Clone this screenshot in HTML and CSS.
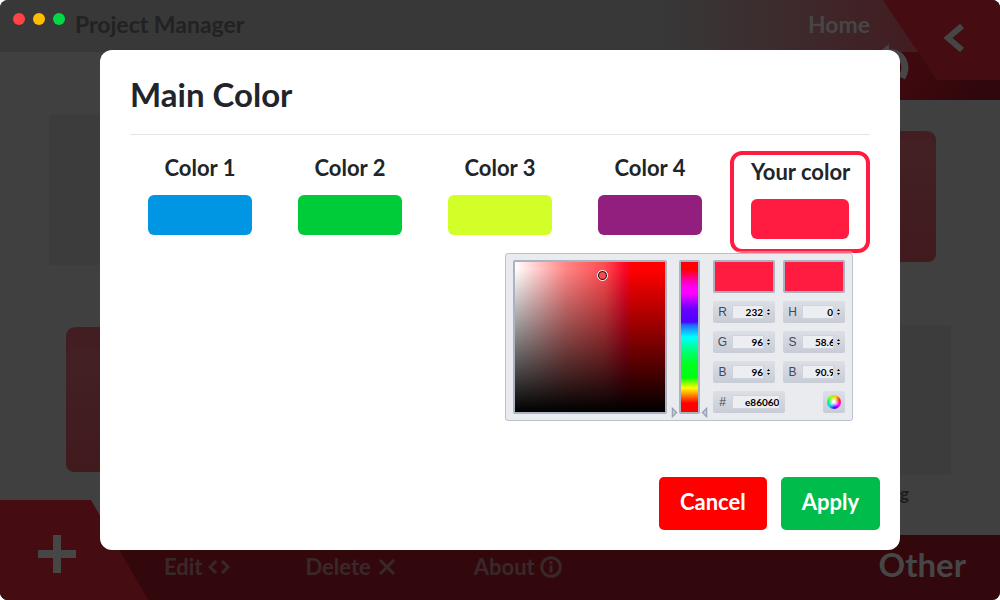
FILE: index.html
```html
<!DOCTYPE html>
<html lang="en">
<head>
<meta charset="utf-8">
<title>Project Manager</title>
<link rel="stylesheet" href="styles.css">
</head>
<body>
<svg class="symbols" aria-hidden="true">
  <defs>
    <linearGradient id="front" x1="0" y1="0" x2="0" y2="1"><stop offset="0" stop-color="#422124"/><stop offset="1" stop-color="#411a1e"/></linearGradient>
    <symbol id="folder" viewBox="0 0 150 150">
      <path fill="#421e22" d="M27 2h35q6 0 9 7t9 7h45q10 0 10 10v100H17V12Q17 2 27 2z"/>
      <rect x="17" y="24" width="118" height="123" rx="8" fill="url(#front)"/>
    </symbol>
  </defs>
</svg>
<div class="app">
  <header class="topbar">
    <div class="lights"><span class="light close"></span><span class="light minimize"></span><span class="light maximize"></span></div>
    <span class="app-name">Project Manager</span>
    <a class="home" href="#">Home</a>
    <div class="side-panel">
      <svg class="undo" viewBox="0 0 40 40"><path d="M16 2v18L5 11z" fill="#464646"/><path d="M14 11Q30 9 32 25q0 5-3 11" fill="none" stroke="#464646" stroke-width="7"/></svg>
    </div>
    <button class="back" aria-label="Back"><svg viewBox="0 0 24 32"><path d="M20 4 6 16l14 12" fill="none" stroke="#464646" stroke-width="6"/></svg></button>
  </header>
  <main class="projects">
    <div class="tile"></div>
    <svg class="folder"><use href="#folder"/></svg>
    <svg class="folder"><use href="#folder"/></svg>
    <div class="tile"><span class="tile-label">g</span></div>
  </main>
  <footer class="bottombar">
    <button class="add" aria-label="Add"><svg viewBox="0 0 38 38"><path d="M19 0v38M0 19h38" stroke="#464646" stroke-width="8"/></svg></button>
    <button class="action">Edit <svg viewBox="0 0 22 20"><path d="M8 4 2 10l6 6M14 4l6 6-6 6" /></svg></button>
    <button class="action">Delete <svg viewBox="0 0 22 20"><path d="m4 3 14 14M18 3 4 17"/></svg></button>
    <button class="action">About <svg viewBox="0 0 22 22"><circle cx="11" cy="11" r="9.3"/><path d="M11 9.500v7M11 5v3"/></svg></button>
    <span class="other">Other</span>
  </footer>
</div>
<div class="overlay">
  <section class="modal" role="dialog" aria-labelledby="modal-title">
    <h1 class="title" id="modal-title">Main Color</h1>
    <div class="options">
      <div class="option"><button class="choice">Color 1<span class="swatch blue"></span></button></div>
      <div class="option"><button class="choice">Color 2<span class="swatch green"></span></button></div>
      <div class="option"><button class="choice">Color 3<span class="swatch lime"></span></button></div>
      <div class="option"><button class="choice">Color 4<span class="swatch purple"></span></button></div>
      <div class="option">
        <button class="choice selected">Your color<span class="swatch red"></span></button>
        <div class="picker">
          <div class="area"><span class="cursor"></span></div>
          <div class="hue">
            <svg viewBox="0 0 6 10"><path d="M1 1v8l4-4z"/></svg>
            <input type="range" aria-label="Hue" min="0" max="360" value="0">
            <svg viewBox="0 0 6 10"><path d="M5 1v8L1 5z"/></svg>
          </div>
          <div class="fields">
            <span class="preview"></span><span class="preview"></span>
            <label class="field"><span class="key">R</span><input value="232"><svg class="spin" viewBox="0 0 5 8"><path d="M1 3h3L2.500 1zM1 5h3L2.500 7z"/></svg></label>
            <label class="field"><span class="key">H</span><input value="0"><svg class="spin" viewBox="0 0 5 8"><path d="M1 3h3L2.500 1zM1 5h3L2.500 7z"/></svg></label>
            <label class="field"><span class="key">G</span><input value="96"><svg class="spin" viewBox="0 0 5 8"><path d="M1 3h3L2.500 1zM1 5h3L2.500 7z"/></svg></label>
            <label class="field"><span class="key">S</span><input value="58.6"><svg class="spin" viewBox="0 0 5 8"><path d="M1 3h3L2.500 1zM1 5h3L2.500 7z"/></svg></label>
            <label class="field"><span class="key">B</span><input value="96"><svg class="spin" viewBox="0 0 5 8"><path d="M1 3h3L2.500 1zM1 5h3L2.500 7z"/></svg></label>
            <label class="field"><span class="key">B</span><input value="90.9"><svg class="spin" viewBox="0 0 5 8"><path d="M1 3h3L2.500 1zM1 5h3L2.500 7z"/></svg></label>
            <label class="field hex"><span class="key">#</span><input value="e86060"></label>
            <button class="submit" aria-label="Use color"><span class="wheel"></span></button>
          </div>
        </div>
      </div>
    </div>
    <div class="buttons">
      <button class="button cancel">Cancel</button>
      <button class="button apply">Apply</button>
    </div>
  </section>
</div>
</body>
</html>
```
FILE: styles.css
```css
* { box-sizing: border-box; }
body { margin: 0; background: #fff; font-family: Lato, "Open Sans", sans-serif; font-weight: 700; }
button { border: 0; padding: 0; background: none; font: inherit; color: inherit; }
.symbols { position: absolute; width: 0; height: 0; }

.app { display: flex; flex-direction: column; min-height: 100vh; background: #404040; border-radius: 8px; overflow: hidden; }
.topbar { position: relative; display: flex; align-items: center; height: 52px; padding: 0 130px 4px 13px; font-size: 23px; background: linear-gradient(90deg, #383838 66%, #421e22 90%); }
.lights { display: flex; gap: 8px; padding-bottom: 10px; }
.light { width: 12px; height: 12px; border-radius: 50%; }
.close { background: #ff4245; }
.minimize { background: #ffbd00; }
.maximize { background: #00d944; }
.app-name { flex: 1; padding-left: 10px; color: #222; }
.home { color: #464646; text-decoration: none; }
.side-panel { position: absolute; top: 52px; right: 0; width: 140px; height: 48px; background: linear-gradient(135deg, #3d090f 40%, #30070b 85%); }
.undo { position: absolute; top: -10px; left: 13px; width: 40px; height: 40px; }
.back { position: absolute; top: 0; right: 0; width: 117px; height: 80px; padding-left: 24px; background: #450c11; clip-path: polygon(0 0, 100% 0, 100% 100%, 54px 100%); }
.back svg { width: 24px; height: 32px; }

.projects { flex: 1; display: grid; grid-template-columns: 150px 150px; grid-auto-rows: 150px; justify-content: space-between; row-gap: 60px; padding: 63px 49px 0; }
.tile { background: #3c3c3c; }
.folder { width: 150px; height: 150px; }
.projects .folder:nth-child(3) { grid-column: 1; grid-row: 2; }
.tile-label { display: block; padding: 160px 42px 0 0; text-align: right; font-size: 17px; line-height: 18px; color: #1c1c1c; }

.bottombar { position: relative; display: flex; align-items: center; height: 65px; padding: 0 34px 2px 164px; gap: 76px; background: #32080d; color: #3a2829; font-size: 22px; }
.add { position: absolute; left: 0; bottom: 0; width: 148px; height: 100px; padding: 12px 34px 0 0; background: #450c11; clip-path: polygon(0 0, 91px 0, 100% 100%, 0 100%); }
.add svg { width: 38px; height: 38px; }
.action { display: flex; align-items: center; gap: 5px; }
.action svg { width: 22px; height: 22px; fill: none; stroke: #3a2829; stroke-width: 3; }
.other { margin-left: auto; padding-bottom: 6px; font-size: 33px; color: #464646; }

.overlay { position: fixed; inset: 0; display: flex; padding: 50px 100px; }
.modal { flex: 1; display: flex; flex-direction: column; padding: 20px 20px 20px 30px; background: #fff; border-radius: 12px; color: #212529; }
.title { margin: 0 10px 16px 0; padding-bottom: 16px; border-bottom: 1px solid #e3e4e5; font-size: 33px; line-height: 48px; }
.options { display: grid; grid-template-columns: repeat(5, minmax(0, 1fr)); gap: 10px; margin-right: 10px; }
.option { position: relative; }
.choice { display: block; width: 100%; padding: 0 18px; font-size: 22px; line-height: 34px; }
.swatch { display: block; height: 40px; margin-top: 10px; border-radius: 6px; }
.blue { background: #0096e4; }
.green { background: #00cc3a; }
.lime { background: #d2ff27; }
.purple { background: #921e7e; }
.red { background: #ff1c40; }
.selected { padding: 0 17px 10px; border: 4px solid #ff1c40; border-radius: 12px; white-space: nowrap; }

.picker { position: absolute; top: 102px; right: 17px; display: flex; align-items: flex-start; width: 348px; height: 168px; padding: 6px 6px 6px 7px; background: #eaebef; border: 1px solid #bcc1d0; border-radius: 3px; box-shadow: 0 -2px 0 rgba(255, 255, 255, 0.35); }
.area { position: relative; width: 154px; height: 154px; border: 2px solid #abb2c2; border-radius: 2px; background: linear-gradient(rgba(0, 0, 0, 0) 5%, #000), linear-gradient(90deg, #fff, #ff8585 34%, #ff4a4f 60%, #fa0828 73%, #f00 78%); }
.cursor { position: absolute; left: 82px; top: 8px; width: 11px; height: 11px; border: 1px solid #fff; border-radius: 50%; box-shadow: inset 0 0 0 1px #000; }
.hue { display: flex; align-items: flex-end; margin-left: 4px; }
.hue svg { width: 7px; height: 11px; margin-bottom: -4px; fill: #c0c6d5; stroke: #959db3; }
.hue input { appearance: none; writing-mode: vertical-lr; width: 21px; height: 154px; margin: 0 1px; border: 2px solid #abb2c2; border-radius: 2px; background: linear-gradient(#f00 5%, #ff0090 11%, #f0f 17%, #f0f 21%, #6a00ff 31%, #5000ff 40%, #2068ff 42%, #00ffff 50%, #00ff70 60%, #00ff20 68%, #00ff10 77%, #ff0 84%, #f00 94%); }
.hue input::-webkit-slider-thumb { appearance: none; width: 1px; height: 1px; opacity: 0; }
.fields { display: grid; grid-template-columns: 62px 62px; grid-template-rows: 33px repeat(4, 22px); column-gap: 8px; row-gap: 8px; margin-left: 5px; }
.preview { background: #ff1c40; border: 2px solid #abb2c2; border-radius: 2px; }
.field { display: flex; align-items: center; background: linear-gradient(#dcdfe6, #c8ccd6); border-radius: 2px; color: #3f4a5c; }
.key { width: 19px; text-align: center; font: 12px/22px "Liberation Sans", sans-serif; }
.field input { width: 32px; height: 14px; padding: 0 0 0 12px; border: 1px solid #cfd3dd; background: #edeef2; font: 700 10px/12px Lato, sans-serif; text-align: right; color: #000; }
.spin { width: 5px; height: 8px; margin-left: 2px; }
.hex { width: 72px; }
.hex input { width: 48px; text-align: left; }
.submit { justify-self: end; display: grid; place-items: center; width: 22px; background: linear-gradient(#dcdfe6, #c8ccd6); border-radius: 2px; }
.wheel { width: 14px; height: 14px; border-radius: 50%; background: radial-gradient(#fff 10%, transparent 55%), conic-gradient(from 70deg, #f22, #f0f, #40f, #0cf, #0f6, #9f0, #fc0, #f22); }

.buttons { display: flex; justify-content: flex-end; gap: 14px; margin-top: auto; }
.button { height: 53px; padding: 0 21px 4px; border-radius: 5px; font-size: 22px; color: #fff; }
.cancel { background: #f00; }
.apply { background: #00bc4b; }
```
